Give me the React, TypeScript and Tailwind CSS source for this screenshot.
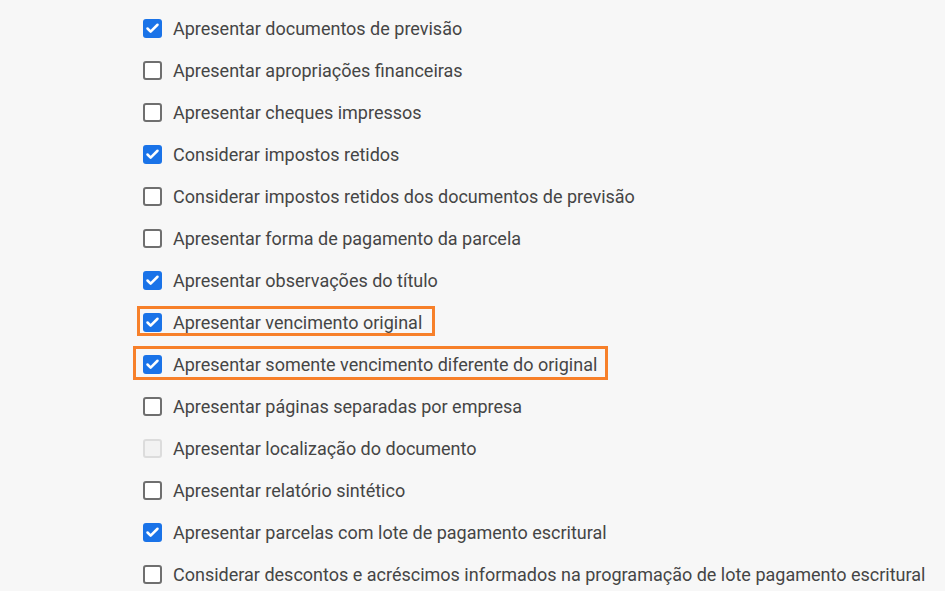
import { Check } from "lucide-react";

type Opt = { label: string; checked?: boolean; disabled?: boolean; mark?: "a" | "b" };

const options: Opt[] = [
  { label: "Apresentar documentos de previsão", checked: true },
  { label: "Apresentar apropriações financeiras" },
  { label: "Apresentar cheques impressos" },
  { label: "Considerar impostos retidos", checked: true },
  { label: "Considerar impostos retidos dos documentos de previsão" },
  { label: "Apresentar forma de pagamento da parcela" },
  { label: "Apresentar observações do título", checked: true },
  { label: "Apresentar vencimento original", checked: true, mark: "a" },
  { label: "Apresentar somente vencimento diferente do original", checked: true, mark: "b" },
  { label: "Apresentar páginas separadas por empresa" },
  { label: "Apresentar localização do documento", disabled: true },
  { label: "Apresentar relatório sintético" },
  { label: "Apresentar parcelas com lote de pagamento escritural", checked: true },
  { label: "Considerar descontos e acréscimos informados na programação de lote pagamento escritural" },
];

const Box = ({ checked, disabled }: { checked?: boolean; disabled?: boolean }) => {
  if (checked)
    return (
      <span className="w-[19px] h-[19px] rounded-[3px] bg-[#1a73e8] flex items-center justify-center shrink-0">
        <Check size={15} strokeWidth={4} className="text-white" />
      </span>
    );
  if (disabled)
    return <span className="w-[19px] h-[19px] rounded-[3px] border-2 border-[#dcdcdc] bg-[#f2f2f2] shrink-0" />;
  return <span className="w-[19px] h-[19px] rounded-[3px] border-2 border-[#6f6f6f] bg-white shrink-0" />;
};

export default function App() {
  return (
    <div className="w-[945px] h-[591px] bg-[#f7f7f7] overflow-hidden pl-[143px] pt-[7px] font-['Roboto',sans-serif]">
      {options.map((o) => (
        <div key={o.label} className="relative h-[42px] flex items-center gap-[11px]">
          <Box checked={o.checked} disabled={o.disabled} />
          <span className="text-[18px] text-[#454545] whitespace-nowrap">{o.label}</span>
          {o.mark === "a" && (
            <span className="absolute left-[-6px] top-[5px] w-[298px] h-[30px] border-[3px] border-[#f7802a]" />
          )}
          {o.mark === "b" && (
            <span className="absolute left-[-10px] top-[3px] w-[475px] h-[34px] border-[3px] border-[#f7802a]" />
          )}
        </div>
      ))}
    </div>
  );
}
